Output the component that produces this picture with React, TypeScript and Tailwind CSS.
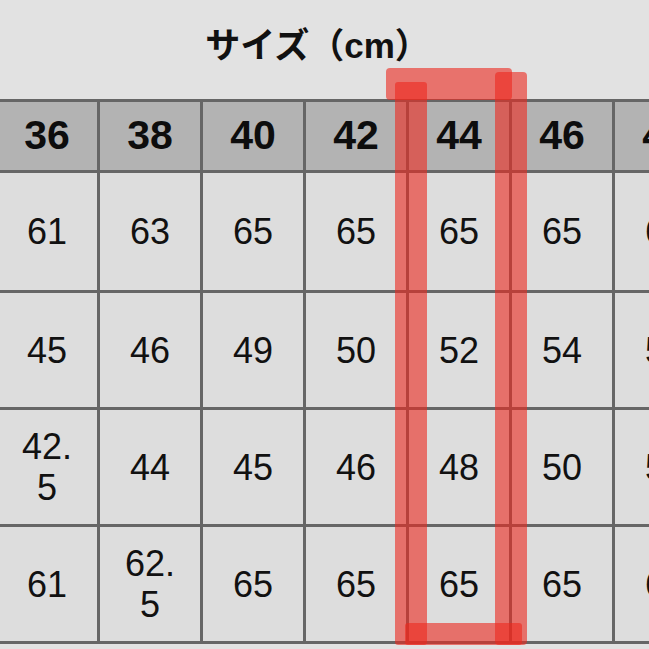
const header = ["36", "38", "40", "42", "44", "46", "48"];

const rows: string[][] = [
    ["61", "63", "65", "65", "65", "65", "65"],
    ["45", "46", "49", "50", "52", "54", "56"],
    ["42.\n5", "44", "45", "46", "48", "50", "52"],
    ["61", "62.\n5", "65", "65", "65", "65", "65"],
];

function Cell({ value }: { value: string }) {
    const lines = value.split("\n");
    return (
        <div className="bg-[#dddddd] flex flex-col items-center justify-center text-[36px] leading-[41px] text-[#111]">
            {lines.map((l, i) => (
                <span key={i}>{l}</span>
            ))}
        </div>
    );
}

export default function App() {
    return (
        <div
            className="relative w-[649px] h-[649px] overflow-hidden bg-[#e2e2e2]"
            style={{ fontFamily: '"Liberation Sans", "Noto Sans CJK JP", sans-serif' }}
        >
            <div className="h-[99px] pt-[24px] pr-[14px] text-center">
                <h1 className="text-[35px] leading-[44px] font-bold text-[#111]">
                    サイズ（cm）
                </h1>
            </div>

            <div className="w-full overflow-hidden">
                <div className="-ml-[3px] w-max grid grid-cols-[repeat(7,100px)] grid-rows-[68px_117px_114px_114px_114px] gap-[3px] py-[3px] bg-[#666666]">
                    {header.map((h) => (
                        <div
                            key={h}
                            className="bg-[#b3b3b3] flex items-center justify-center text-[41px] font-bold text-[#0d0d0d]"
                        >
                            {h}
                        </div>
                    ))}
                    {rows.map((r, ri) =>
                        r.map((v, ci) => <Cell key={`${ri}-${ci}`} value={v} />)
                    )}
                </div>
            </div>

            {/* hand drawn red marker round the 44 column */}
            <div className="pointer-events-none absolute inset-0">
                <div className="absolute left-[386px] top-[68px] w-[126px] h-[32px] rounded-[4px] bg-[rgba(236,40,30,0.6)]" />
                <div className="absolute left-[395px] top-[82px] w-[32px] h-[563px] rounded-[3px] bg-[rgba(236,40,30,0.6)]" />
                <div className="absolute left-[495px] top-[72px] w-[32px] h-[573px] rounded-[4px] bg-[rgba(236,40,30,0.6)]" />
                <div className="absolute left-[405px] top-[623px] w-[117px] h-[22px] rounded-[3px] bg-[rgba(236,40,30,0.6)]" />
            </div>
        </div>
    );
}
